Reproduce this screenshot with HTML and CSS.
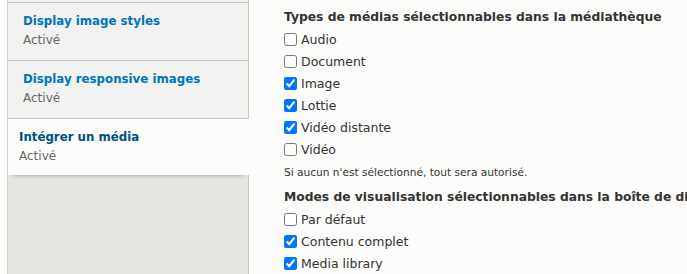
FILE: index.html
```html
<!DOCTYPE html>
<html lang="fr">
<head>
  <meta charset="UTF-8">
  <title>Intégrer un média</title>
  <link rel="stylesheet" href="styles.css">
</head>
<body>
  <div class="vertical-tabs">
    <ul class="tabs-menu">
      <li class="tab tab-cut"></li>
      <li class="tab">
        <a href="#">Display image styles</a>
        <span class="summary">Activé</span>
      </li>
      <li class="tab">
        <a href="#">Display responsive images</a>
        <span class="summary">Activé</span>
      </li>
      <li class="tab is-selected">
        <a href="#">Intégrer un média</a>
        <span class="summary">Activé</span>
      </li>
    </ul>
    <div class="tabs-pane">
      <div class="form-item">
        <h4 class="label">Types de médias sélectionnables dans la médiathèque</h4>
        <label class="option"><input type="checkbox"> Audio</label>
        <label class="option"><input type="checkbox"> Document</label>
        <label class="option"><input type="checkbox" checked> Image</label>
        <label class="option"><input type="checkbox" checked> Lottie</label>
        <label class="option"><input type="checkbox" checked> Vidéo distante</label>
        <label class="option"><input type="checkbox"> Vidéo</label>
        <p class="description">Si aucun n'est sélectionné, tout sera autorisé.</p>
      </div>
      <div class="form-item">
        <h4 class="label">Modes de visualisation sélectionnables dans la boîte de dialogue</h4>
        <label class="option"><input type="checkbox"> Par défaut</label>
        <label class="option"><input type="checkbox" checked> Contenu complet</label>
        <label class="option"><input type="checkbox" checked> Media library</label>
      </div>
    </div>
  </div>
</body>
</html>
```

FILE: styles.css
```css
body {
  margin: 0;
  padding: 0 0 0 7px;
  font-family: "DejaVu Sans", sans-serif;
  font-size: 12.5px;
  color: #333;
  background-color: #fcfcfa;
  overflow: hidden;
}
.vertical-tabs {
  display: flex;
  height: 274px;
}
.tabs-menu {
  list-style: none;
  margin: 0;
  padding: 0;
  width: 240px;
  flex-shrink: 0;
  background-color: #e6e5e1;
  border-left: 1px solid #d4d4d1;
  border-right: 1px solid #c8c8c5;
}
.tab {
  position: relative;
  padding: 8px 15px 11px 15px;
  line-height: 20px;
  background-color: #f2f2f0;
  border-bottom: 1px solid #c8c8c5;
}
.tab-cut {
  height: 2px;
  padding: 0;
}
.tab a {
  display: block;
  font-size: 11.8px;
  font-weight: bold;
  color: #0074bd;
  text-decoration: none;
}
.summary {
  display: block;
  line-height: 18px;
  font-size: 12px;
  color: #666;
}
.tab.is-selected {
  z-index: 1;
  margin-right: -1px;
  padding-left: 11px;
  padding-bottom: 10px;
  background-color: #fcfcfa;
  border-bottom: 0;
  box-shadow: 0 5px 5px -5px rgba(0, 0, 0, 0.3);
}
.tab.is-selected a {
  color: #004f80;
}
.tabs-pane {
  flex: 1;
  padding: 7px 0 0 35px;
  white-space: nowrap;
  overflow: hidden;
}
.label {
  margin: 0 0 1px;
  line-height: 20px;
  font-size: 12.3px;
  font-weight: bold;
}
.option {
  display: flex;
  align-items: center;
  height: 22px;
  color: #333;
}
.option input {
  margin: 0 4px 0 0;
  width: 13px;
  height: 13px;
}
.description {
  margin: 3px 0 6px;
  line-height: 18px;
  font-size: 10.6px;
  color: #333;
}
```
